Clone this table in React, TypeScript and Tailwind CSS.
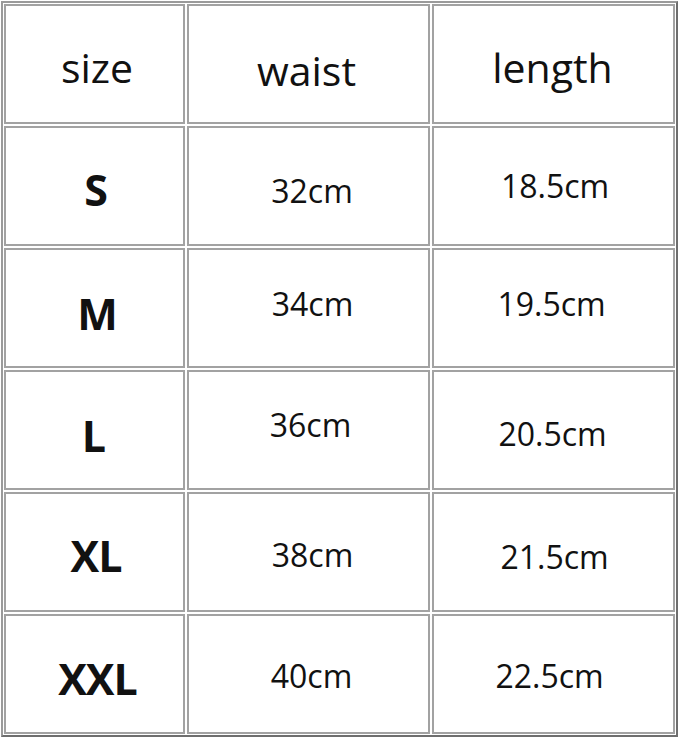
import React from "react";

type Cell = { text: string; cls: string };

const header: Cell[] = [
  { text: "size", cls: "pl-[5px] pt-[7px]" },
  { text: "waist", cls: "pr-[4px] pt-[13px]" },
  { text: "length", cls: "pr-[2px] pt-[7px]" },
];

const rows: Cell[][] = [
  [
    { text: "S", cls: "pl-[2px] pt-[7px]" },
    { text: "32cm", cls: "pl-[7px] pt-[10px]" },
    { text: "18.5cm", cls: "pl-[3px]" },
  ],
  [
    { text: "M", cls: "pl-[5px] pt-[10px]" },
    { text: "34cm", cls: "pl-[8px] pb-[9px]" },
    { text: "19.5cm", cls: "pr-[4px] pb-[9px]" },
  ],
  [
    { text: "L", cls: "pr-[2px] pt-[10px]" },
    { text: "36cm", cls: "pl-[4px] pb-[11px]" },
    { text: "20.5cm", cls: "pr-[2px] pt-[8px]" },
  ],
  [
    { text: "XL", cls: "pl-[3px] pt-[6px]" },
    { text: "38cm", cls: "pl-[8px] pt-[6px]" },
    { text: "21.5cm", cls: "pl-[2px] pt-[10px]" },
  ],
  [
    { text: "XXL", cls: "pl-[6px] pt-[8px]" },
    { text: "40cm", cls: "pl-[6px] pt-[4px]" },
    { text: "22.5cm", cls: "pr-[8px] pt-[4px]" },
  ],
];

export default function App() {
  return (
    <div
      className="w-[679px] h-[740px] bg-white p-px"
      style={{ fontFamily: '"Open Sans", "Noto Sans", sans-serif' }}
    >
      <div className="w-[677px] border-2 border-t-[#9a9a9a] border-l-[#9a9a9a] border-r-[#6e6e6e] border-b-[#6e6e6e] p-px">
        <div className="grid grid-cols-[181px_243px_243px] grid-rows-[repeat(6,120px)] gap-[2px]">
          {header.map((c) => (
            <div
              key={c.text}
              className={`flex items-center justify-center border-2 border-[#a2a2a2] text-[41px] leading-none text-[#111] ${c.cls}`}
            >
              {c.text}
            </div>
          ))}
          {rows.map((r) =>
            r.map((c, i) => (
              <div
                key={c.text}
                className={
                  i === 0
                    ? `flex items-center justify-center border-2 border-[#a2a2a2] text-[43px] font-bold leading-none tracking-[-1px] text-[#111] ${c.cls}`
                    : `flex items-center justify-center border-2 border-[#a2a2a2] text-[32px] leading-none text-[#111] ${c.cls}`
                }
              >
                {c.text}
              </div>
            ))
          )}
        </div>
      </div>
    </div>
  );
}
